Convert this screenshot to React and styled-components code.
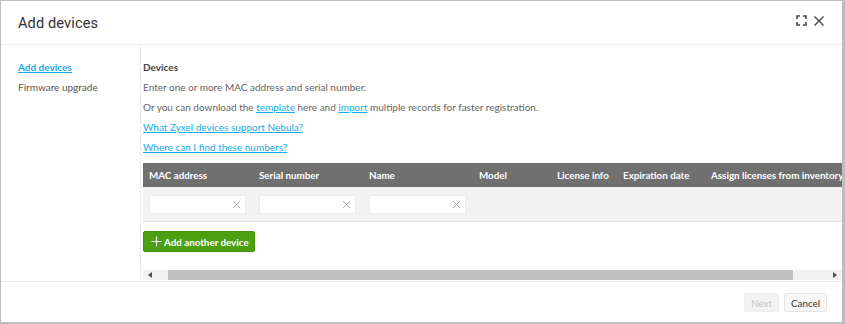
import React from "react";
import styled, { createGlobalStyle } from "styled-components";

const Global = createGlobalStyle`
  html, body { margin: 0; padding: 0; }
  body {
    background: #bdbdbd;
    font-family: "Lato", "Noto Sans", sans-serif;
    width: 845px;
    height: 324px;
    overflow: hidden;
  }
`;

const Modal = styled.div`
  margin: 1px 3px 2px 1px;
  width: 841px;
  height: 321px;
  background: #fff;
  display: flex;
  flex-direction: column;
  box-sizing: border-box;
  overflow: hidden;
`;

const Header = styled.div`
  height: 43px;
  flex: none;
  display: flex;
  align-items: center;
  justify-content: space-between;
  padding: 0 17px 0 17px;
  border-bottom: 1px solid #ececec;
`;

const Title = styled.h1`
  margin: 0;
  font-family: "Roboto", sans-serif;
  font-weight: 400;
  font-size: 14.6px;
  color: #333;
  letter-spacing: 0.1px;
`;

const HeaderIcons = styled.div`
  display: flex;
  align-items: center;
  gap: 6px;
  margin-top: -4px;
`;

const Body = styled.div`
  flex: 1;
  display: flex;
  min-height: 0;
`;

const Sidebar = styled.nav`
  width: 140px;
  flex: none;
  border-right: 1px solid #ececec;
  padding-top: 16px;
  box-sizing: border-box;
  display: flex;
  flex-direction: column;
  gap: 8px;
`;

const SideItem = styled.a`
  display: block;
  padding-left: 17px;
  font-size: 10px;
  line-height: 12px;
  color: ${(p) => (p.$active ? "#17acea" : "#555")};
  font-weight: ${(p) => (p.$active ? 700 : 400)};
  text-decoration: ${(p) => (p.$active ? "underline" : "none")};
`;

const Content = styled.div`
  flex: 1;
  min-width: 0;
  display: flex;
  flex-direction: column;
  padding-top: 16px;
  padding-left: 2px;
  padding-bottom: 1px;
  overflow: hidden;
`;

const Text = styled.div`
  font-size: 10px;
  line-height: 12px;
  height: 12px;
  margin-bottom: 8px;
  color: ${(p) => (p.$bold ? "#444" : "#666")};
  font-weight: ${(p) => (p.$bold ? 700 : 400)};
  white-space: nowrap;
`;

const Link = styled.a`
  color: #17acea;
  text-decoration: underline;
`;

const Table = styled.div`
  margin-top: 2px;
  width: 760px;
`;

const Row = styled.div`
  display: grid;
  grid-template-columns: 110px 110px 110px 78px 66px 88px 1fr;
  align-items: center;
  background: ${(p) => (p.$head ? "#707070" : "#f2f2f2")};
  height: ${(p) => (p.$head ? "24px" : "34px")};
  border-bottom: ${(p) => (p.$head ? "none" : "1px solid #e6e6e6")};
`;

const Th = styled.div`
  padding-left: 6px;
  color: #fff;
  font-weight: 700;
  font-size: 9.8px;
  white-space: nowrap;
`;

const Td = styled.div`
  padding-left: 6px;
`;

const Input = styled.div`
  width: 97px;
  height: 19px;
  background: #fff;
  border: 1px solid #ececec;
  box-sizing: border-box;
  display: flex;
  align-items: center;
  justify-content: flex-end;
  padding-right: 4px;
  color: #999;
  font-size: 11px;
`;

const AddButton = styled.button`
  margin-top: 9px;
  align-self: flex-start;
  height: 21px;
  padding: 0 5px 0 7px;
  background: #4ba00f;
  border: 1px solid #43920b;
  border-radius: 2px;
  color: #fff;
  font-family: "Lato", sans-serif;
  font-weight: 700;
  font-size: 9.8px;
  display: flex;
  align-items: center;
  gap: 2px;
`;

const ScrollBar = styled.div`
  margin-top: 16px;
  height: 10px;
  background: #f1f1f1;
  display: flex;
  align-items: center;
`;

const Arrow = styled.div`
  width: 14px;
  display: flex;
  justify-content: center;
  align-items: center;
`;

const Thumb = styled.div`
  margin-left: 11px;
  width: 625px;
  height: 10px;
  background: #c1c1c1;
`;

const Spacer = styled.div`
  flex: 1;
`;

const Footer = styled.div`
  height: 40px;
  flex: none;
  border-top: 1px solid #ececec;
  display: flex;
  justify-content: flex-end;
  align-items: center;
  gap: 5px;
  padding-right: 15px;
`;

const FootButton = styled.button`
  height: 19px;
  padding: 0 6px;
  font-family: "Lato", sans-serif;
  font-size: 9.8px;
  border-radius: 2px;
  border: 1px solid ${(p) => (p.$disabled ? "#f0f0f0" : "#e4e4e4")};
  background: ${(p) => (p.$disabled ? "#f2f2f2" : "#f7f7f7")};
  color: ${(p) => (p.$disabled ? "#c4c4c4" : "#333")};
  margin-top: 1px;
`;

const Close = () => (
  <svg width="9" height="9" viewBox="0 0 9 9">
    <path d="M1 1L8 8M8 1L1 8" stroke="#aaa" strokeWidth="1" />
  </svg>
);

export default function App() {
  const cols = [
    "MAC address",
    "Serial number",
    "Name",
    "Model",
    "License info",
    "Expiration date",
    "Assign licenses from inventory",
  ];
  return (
    <>
      <Global />
      <Modal>
        <Header>
          <Title>Add devices</Title>
          <HeaderIcons>
            <svg width="11" height="11" viewBox="0 0 11 11">
              <path
                d="M1 4V1H4M7 1H10V4M10 7V10H7M4 10H1V7"
                fill="none"
                stroke="#444"
                strokeWidth="1.6"
              />
            </svg>
            <svg width="12" height="12" viewBox="0 0 12 12">
              <path d="M1.5 1.5L10.5 10.5M10.5 1.5L1.5 10.5" stroke="#444" strokeWidth="1.4" />
            </svg>
          </HeaderIcons>
        </Header>
        <Body>
          <Sidebar>
            <SideItem $active>Add devices</SideItem>
            <SideItem>Firmware upgrade</SideItem>
          </Sidebar>
          <Content>
            <Text $bold>Devices</Text>
            <Text>Enter one or more MAC address and serial number.</Text>
            <Text>
              Or you can download the <Link>template</Link> here and <Link>import</Link> multiple
              records for faster registration.
            </Text>
            <Text>
              <Link>What Zyxel devices support Nebula?</Link>
            </Text>
            <Text>
              <Link>Where can I find these numbers?</Link>
            </Text>
            <Table>
              <Row $head>
                {cols.map((c) => (
                  <Th key={c}>{c}</Th>
                ))}
              </Row>
              <Row>
                {[0, 1, 2].map((i) => (
                  <Td key={i}>
                    <Input>
                      <Close />
                    </Input>
                  </Td>
                ))}
              </Row>
            </Table>
            <AddButton>
              <svg width="11" height="11" viewBox="0 0 11 11">
                <path d="M5.5 0.5V10.5M0.5 5.5H10.5" stroke="#fff" strokeWidth="1.1" />
              </svg>
              Add another device
            </AddButton>
            <Spacer />
            <ScrollBar>
              <Arrow>
                <svg width="4" height="6" viewBox="0 0 4 6">
                  <path d="M4 0V6L0 3Z" fill="#505050" />
                </svg>
              </Arrow>
              <Thumb />
              <Spacer />
              <Arrow>
                <svg width="4" height="6" viewBox="0 0 4 6">
                  <path d="M0 0V6L4 3Z" fill="#505050" />
                </svg>
              </Arrow>
            </ScrollBar>
          </Content>
        </Body>
        <Footer>
          <FootButton $disabled>Next</FootButton>
          <FootButton>Cancel</FootButton>
        </Footer>
      </Modal>
    </>
  );
}
